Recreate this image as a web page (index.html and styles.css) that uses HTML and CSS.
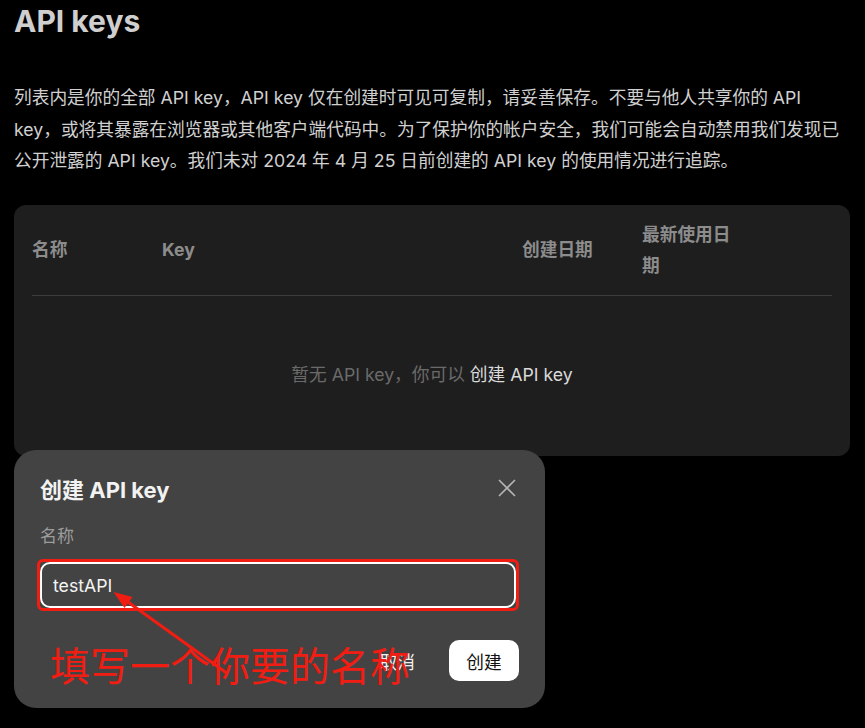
FILE: index.html
```html
<!DOCTYPE html>
<html lang="zh-CN">

<head>
  <meta charset="UTF-8">
  <title>API keys</title>
  <link rel="stylesheet" href="styles.css">
</head>

<body>
  <div class="page">
    <h1 class="title">API keys</h1>

    <p class="intro">列表内是你的全部 API key，API key 仅在创建时可见可复制，请妥善保存。不要与他人共享你的 API key，或将其暴露在浏览器或其他客户端代码中。为了保护你的帐户安全，我们可能会自动禁用我们发现已公开泄露的 API key。我们未对 2024 年 4 月 25 日前创建的 API key 的使用情况进行追踪。</p>

    <div class="card">
      <div class="thead">
        <div class="th">名称</div>
        <div class="th">Key</div>
        <div class="th">创建日期</div>
        <div class="th">最新使用日期</div>
        <div class="th"></div>
      </div>
      <div class="empty">
        <span class="muted">暂无 API key，你可以</span>&nbsp;<a href="#" class="link">创建 API key</a>
      </div>
    </div>
  </div>

  <div class="modal">
    <div class="modal-head">
      <h2 class="modal-title">创建 API key</h2>
      <button class="close" aria-label="关闭">
        <svg width="18" height="18" viewBox="0 0 18 18">
          <path d="M1 1 L17 17 M17 1 L1 17" stroke="#b4b4b4" stroke-width="1.6" fill="none" />
        </svg>
      </button>
    </div>

    <label for="keyname" class="field-label">名称</label>
    <input type="text" id="keyname" class="field" value="testAPI">

    <div class="actions">
      <button class="cancel">取消</button>
      <button class="create">创建</button>
    </div>

    <!-- annotation drawn over the dialog -->
    <div class="mark-box"></div>
    <svg class="mark-arrow" width="531" height="258" viewBox="0 0 531 258">
      <line x1="114" y1="152" x2="214" y2="224" stroke="#f21d12" stroke-width="3" />
      <polygon points="99.5,142 118.5,147 110.5,158" fill="#f21d12" />
    </svg>
    <div class="mark-text">填写一个你要的名称</div>
  </div>
</body>

</html>
```

FILE: styles.css
```css
html,
body {
  height: 100%;
}

body {
  margin: 0;
  background: #000;
  font-family: Inter, "Noto Sans CJK SC", sans-serif;
  color: #d2d2d2;
}

.page {
  width: 836px;
  padding-left: 14px;
}

.title {
  margin: 1px 0 0;
  font-size: 30px;
  line-height: 40px;
  font-weight: 700;
  color: #cfcfcf;
}

.intro {
  margin: 41px 0 0;
  width: 830px;
  font-size: 17.7px;
  line-height: 31.5px;
  color: #d0d0d0;
}

.card {
  margin-top: 28px;
  height: 251px;
  background: #1e1e1e;
  border-radius: 12px;
  padding: 0 18px;
  box-sizing: border-box;
  display: flex;
  flex-direction: column;
}

.thead {
  height: 90px;
  display: grid;
  grid-template-columns: 130px 360px 120px 96px 1fr;
  align-items: center;
  border-bottom: 1.5px solid #3c3c3c;
}

.th {
  font-size: 17.7px;
  line-height: 31px;
  font-weight: 700;
  color: #8c8c8c;
}

.empty {
  flex: 1;
  display: flex;
  align-items: center;
  justify-content: center;
  padding-bottom: 6px;
  font-size: 17.7px;
}

.muted {
  color: #6a6a6a;
}

.link {
  color: #dadada;
  text-decoration: none;
}

.modal {
  position: absolute;
  left: 14px;
  top: 450px;
  width: 531px;
  height: 258px;
  box-sizing: border-box;
  padding: 22px 26px 0 26px;
  background: #434343;
  border-radius: 22px;
}

.modal-head {
  display: flex;
  align-items: center;
  justify-content: space-between;
  height: 32px;
  padding-right: 3px;
}

.modal-title {
  margin: 0;
  font-size: 22px;
  font-weight: 700;
  color: #f2f2f2;
}

.close {
  background: none;
  border: none;
  padding: 0;
  width: 18px;
  height: 18px;
  display: flex;
}

.field-label {
  display: block;
  margin-top: 20px;
  font-size: 17px;
  line-height: 24px;
  color: #9c9c9c;
}

.field {
  display: block;
  margin-top: 14px;
  width: 476px;
  height: 46px;
  box-sizing: border-box;
  padding: 0 11px;
  background: #434343;
  border: 2px solid #fff;
  border-radius: 10px;
  font-family: Inter, "Noto Sans CJK SC", sans-serif;
  font-size: 17.7px;
  color: #f4f4f4;
  outline: none;
}

.actions {
  display: flex;
  justify-content: flex-end;
  align-items: center;
  margin-top: 32px;
}

.cancel {
  background: none;
  border: none;
  padding: 0;
  margin-right: 34px;
  font-family: Inter, "Noto Sans CJK SC", sans-serif;
  font-size: 17.7px;
  color: #f0f0f0;
}

.create {
  height: 41px;
  width: 70px;
  background: #fff;
  border: none;
  border-radius: 10px;
  font-family: Inter, "Noto Sans CJK SC", sans-serif;
  font-size: 17.7px;
  color: #111;
}

.mark-box {
  position: absolute;
  left: 23px;
  top: 109px;
  width: 482px;
  height: 52px;
  box-sizing: border-box;
  border: 3px solid #f21d12;
  border-radius: 6px;
}

.mark-arrow {
  position: absolute;
  left: 0;
  top: 0;
}

.mark-text {
  position: absolute;
  left: 36px;
  top: 194px;
  font-family: "Noto Sans CJK SC", sans-serif;
  font-size: 40px;
  line-height: 40px;
  color: #f21d12;
}
```
